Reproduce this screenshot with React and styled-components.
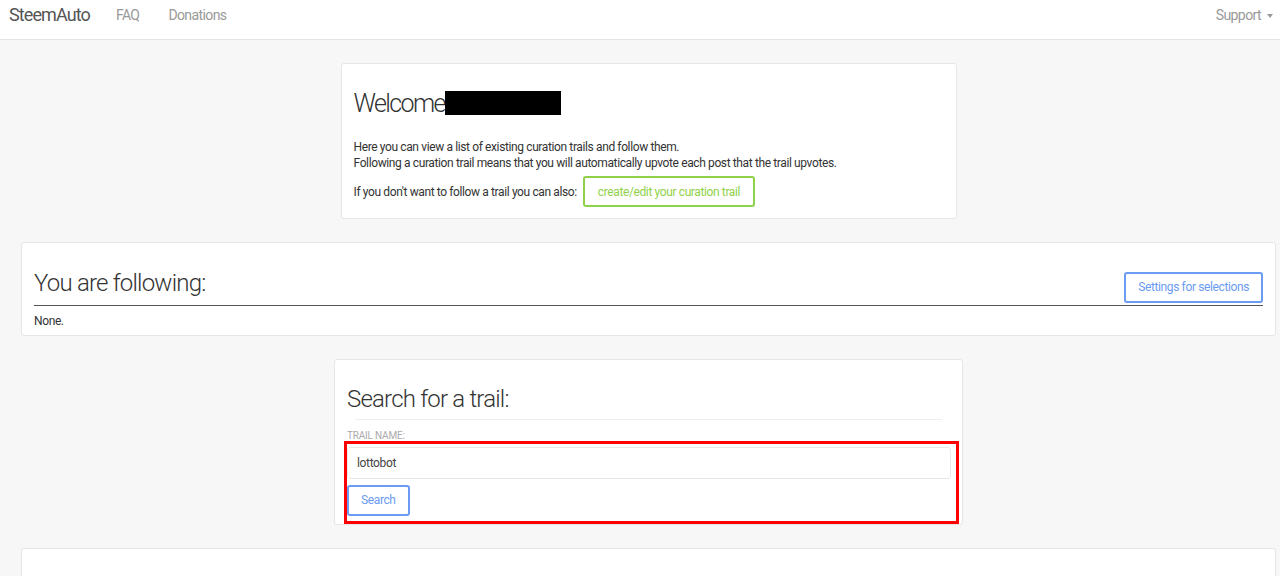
import React from 'react'
import styled, { createGlobalStyle } from 'styled-components'

const GlobalStyle = createGlobalStyle`
    html, body {
        margin: 0;
        padding: 0;
        background: #f7f7f7;
        font-family: Roboto, "Liberation Sans", sans-serif;
        color: #333;
    }
    * { box-sizing: border-box; }
`;

const Navbar = styled.nav`
    display: flex;
    align-items: center;
    height: 40px;
    padding: 0 7px 0 9px;
    background: #fff;
    border-bottom: 1px solid #e4e4e4;
`;

const Brand = styled.a`
    font-size: 18px;
    letter-spacing: -0.9px;
    color: #555;
    margin-right: 26px;
    margin-top: -10px;
`;

const NavLink = styled.a`
    font-size: 14px;
    letter-spacing: -0.6px;
    color: #999;
    margin-right: ${(p) => p.mr || '29px'};
    margin-top: -10px;
`;

const Spacer = styled.div`
    flex: 1;
`;

const Caret = styled.span`
    display: inline-block;
    margin-left: 6px;
    vertical-align: middle;
    border-top: 4px solid #999;
    border-left: 3.5px solid transparent;
    border-right: 3.5px solid transparent;
`;

const Page = styled.main`
    display: flex;
    flex-direction: column;
    align-items: center;
    gap: 23px;
    padding: 23px 4px 0 21px;
`;

const Card = styled.section`
    width: ${(p) => p.width || '100%'};
    min-height: ${(p) => p.minH || 'auto'};
    background: #fff;
    border: 1px solid #e6e6e6;
    border-radius: 3px;
    padding: ${(p) => p.pad || '12px'};
`;

const Title = styled.h2`
    margin: 0 0 ${(p) => p.mb || '0'} 0;
    font-weight: 300;
    font-size: ${(p) => p.size || '24px'};
    letter-spacing: ${(p) => p.ls || '-0.8px'};
    color: #333;
    line-height: 1.2;
`;

const Redacted = styled.span`
    display: inline-block;
    width: 116px;
    height: 24px;
    background: #000;
    vertical-align: -3px;
`;

const Text = styled.p`
    margin: 0;
    font-size: 12px;
    letter-spacing: -0.38px;
    line-height: 16px;
    color: #333;
`;

const Row = styled.div`
    display: flex;
    align-items: center;
    gap: 6px;
    margin-top: 5px;
`;

const OutlineButton = styled.button`
    background: #fff;
    border: 2px solid ${(p) => p.color};
    color: ${(p) => p.color};
    border-radius: 3px;
    font-family: inherit;
    font-size: 12px;
    letter-spacing: -0.38px;
    height: ${(p) => p.h || '31px'};
    padding: 0 ${(p) => p.px || '12px'};
    cursor: pointer;
`;

const HeaderRow = styled.div`
    display: flex;
    align-items: flex-end;
    justify-content: space-between;
    border-bottom: 1px solid #555;
    padding-bottom: 2px;
`;

const Divider = styled.hr`
    border: none;
    border-top: 1px solid #eee;
    margin: 5px 8px 10px 8px;
`;

const Label = styled.label`
    display: block;
    font-size: 10px;
    letter-spacing: -0.2px;
    line-height: 11px;
    color: #aaa;
    text-transform: uppercase;
`;

const Highlight = styled.div`
    display: flex;
    flex-direction: column;
    align-items: flex-start;
    gap: 6px;
    margin: 0 -9px 0 -3px;
    padding: 3px 5px 5px 0;
    border: 3px solid #f00;
`;

const Input = styled.input`
    width: 100%;
    height: 32px;
    border: 1px solid #e8e8e8;
    border-radius: 3px;
    padding: 0 9px;
    font-family: inherit;
    font-size: 12px;
    letter-spacing: -0.35px;
    color: #444;
    outline: none;
`;

export default function App() {
    return (
        <>
            <GlobalStyle />
            <Navbar>
                <Brand>SteemAuto</Brand>
                <NavLink>FAQ</NavLink>
                <NavLink>Donations</NavLink>
                <Spacer />
                <NavLink mr="0">Support<Caret /></NavLink>
            </Navbar>
            <Page>
                <Card width="616px" pad="25px 12px 11px 12px">
                    <Title size="25px" ls="-1.6px">Welcome<Redacted /></Title>
                    <Text style={{ marginTop: 20 }}>Here you can view a list of existing curation trails and follow them.</Text>
                    <Text>Following a curation trail means that you will automatically upvote each post that the trail upvotes.</Text>
                    <Row>
                        <Text>If you don't want to follow a trail you can also:</Text>
                        <OutlineButton color="#8fd24a" h="31px" px="13px">create/edit your curation trail</OutlineButton>
                    </Row>
                </Card>
                <Card pad="26px 12px 6px 12px">
                    <HeaderRow>
                        <Title mb="5px">You are following:</Title>
                        <OutlineButton color="#6b9bf2">Settings for selections</OutlineButton>
                    </HeaderRow>
                    <Text style={{ marginTop: 7 }}>None.</Text>
                </Card>
                <Card width="629px" pad="25px 12px 0 12px">
                    <Title>Search for a trail:</Title>
                    <Divider />
                    <Label>Trail name:</Label>
                    <Highlight>
                        <Input defaultValue="lottobot" />
                        <OutlineButton color="#6b9bf2" h="31px">Search</OutlineButton>
                    </Highlight>
                </Card>
                <Card minH="60px" />
            </Page>
        </>
    )
}
